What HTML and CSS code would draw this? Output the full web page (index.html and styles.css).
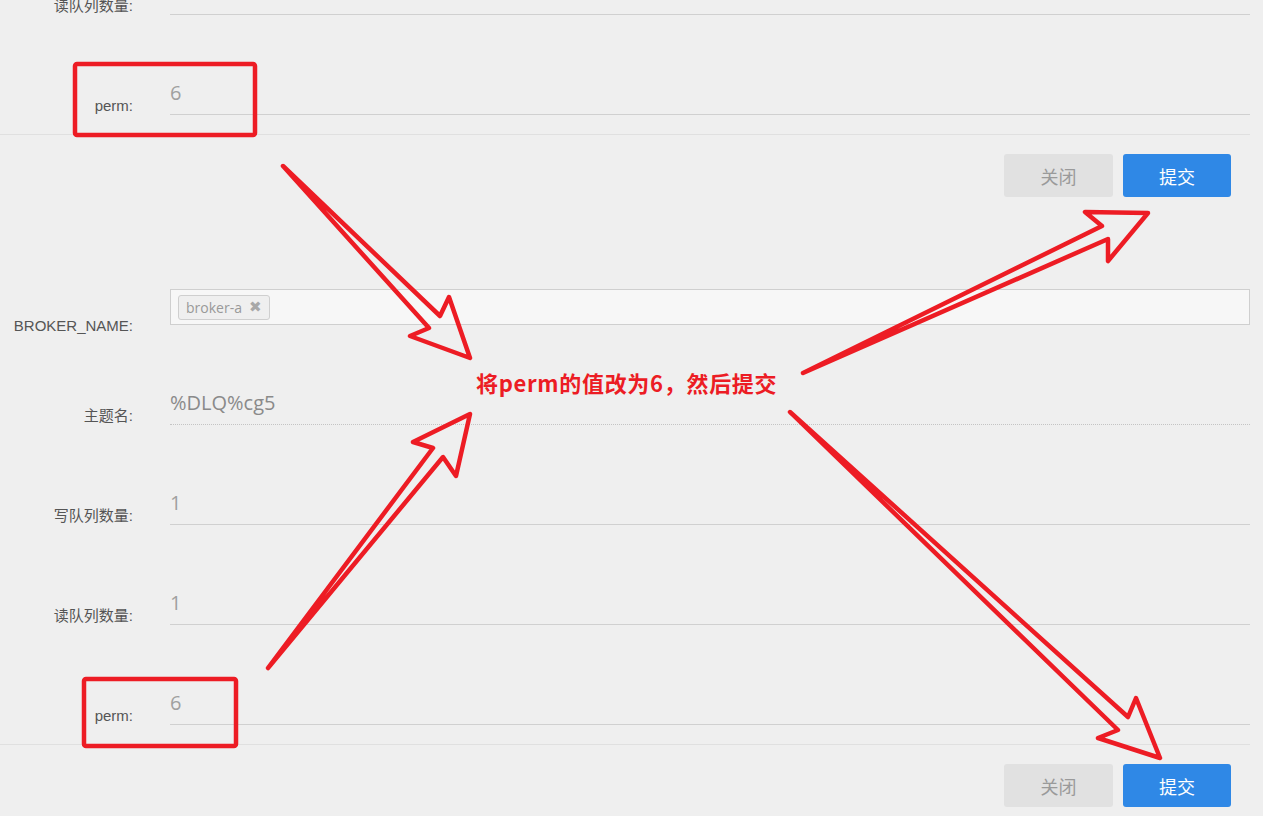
FILE: index.html
```html
<!DOCTYPE html>
<html lang="zh-CN">
<head>
<meta charset="utf-8">
<title>Topic 更新</title>
<link rel="stylesheet" href="styles.css">
</head>
<body>
<div class="page">
  <section class="modal modal-top">
    <div class="form">
      <div class="row">
        <label class="lbl">读队列数量:</label>
        <div class="field"><span class="val">1</span></div>
      </div>
      <div class="row">
        <label class="lbl">perm:</label>
        <div class="field"><span class="val">6</span></div>
      </div>
    </div>
    <div class="footer">
      <button class="btn btn-close">关闭</button>
      <button class="btn btn-submit">提交</button>
    </div>
  </section>

  <section class="modal modal-bottom">
    <div class="form">
      <div class="row row-select">
        <label class="lbl">BROKER_NAME:</label>
        <div class="select"><span class="tag">broker-a <span class="tag-x">✖</span></span></div>
      </div>
      <div class="row">
        <label class="lbl">主题名:</label>
        <div class="field dotted"><span class="val val-topic">%DLQ%cg5</span></div>
      </div>
      <div class="row">
        <label class="lbl">写队列数量:</label>
        <div class="field"><span class="val">1</span></div>
      </div>
      <div class="row">
        <label class="lbl">读队列数量:</label>
        <div class="field"><span class="val">1</span></div>
      </div>
      <div class="row">
        <label class="lbl">perm:</label>
        <div class="field"><span class="val">6</span></div>
      </div>
    </div>
    <div class="footer">
      <button class="btn btn-close">关闭</button>
      <button class="btn btn-submit">提交</button>
    </div>
  </section>
</div>

<div class="annot">
  <svg class="annot-svg" width="1263" height="816" viewBox="0 0 1263 816" xmlns="http://www.w3.org/2000/svg">
    <g fill="none" stroke="#ed1c24" stroke-width="4.5" stroke-linejoin="round" stroke-linecap="round">
      <rect x="75" y="64" width="180" height="71" rx="2"/>
      <rect x="84" y="679" width="152" height="67" rx="2"/>
      <path d="M283,166 L440,316 L449,297 L470,358 L410,336 L429,328 Z"/>
      <path d="M268,668 L433,448 L413,442 L470,414 L456,476 L443,457 Z"/>
      <path d="M803,373 L1102,226 L1085,212 L1148,213 L1108,261 L1108,239 Z"/>
      <path d="M790,412 L1128,717 L1136,698 L1160,758 L1098,738 L1118,730 Z"/>
    </g>
  </svg>
  <p class="note">将perm的值改为6，然后提交</p>
</div>
</body>
</html>
```

FILE: styles.css
```css
html, body {
  margin: 0;
  padding: 0;
}

body {
  position: relative;
  width: 1263px;
  height: 816px;
  overflow: hidden;
  background: #efefef;
  font-family: "Liberation Sans", "Noto Sans CJK SC", sans-serif;
}

.page {
  display: flex;
  flex-direction: column;
}

.modal-top .form {
  margin-top: -85px;
}

.form {
  display: flex;
  flex-direction: column;
  padding-bottom: 19px;
}

.row {
  display: grid;
  grid-template-columns: 133px 1fr;
  column-gap: 37px;
  align-items: end;
  height: 100px;
  padding-right: 13px;
}

.lbl {
  text-align: right;
  font-size: 15px;
  line-height: 18px;
  color: #555;
  white-space: nowrap;
}

.field {
  height: 24px;
  padding-bottom: 9px;
  border-bottom: 1px solid #d0d0d0;
  font-family: "Open Sans", sans-serif;
  font-size: 20px;
  line-height: 24px;
  color: #a0a0a0;
}

.field.dotted {
  border-bottom: 1px dotted #c4c4c4;
}

.val-topic {
  color: #8a8a8a;
}

.row-select {
  height: 36px;
  margin-top: 92px;
}

.row-select .lbl {
  margin-bottom: -10px;
}

.select {
  box-sizing: border-box;
  height: 36px;
  border: 1px solid #cfcfcf;
  background: #f7f7f7;
  padding: 0 7px;
  display: flex;
  align-items: center;
}

.tag {
  box-sizing: border-box;
  height: 25px;
  display: inline-flex;
  align-items: center;
  gap: 7px;
  padding: 0 7px 0 7px;
  border: 1px solid #cfcfcf;
  border-radius: 3px;
  background: #efefef;
  font-family: "Open Sans", sans-serif;
  font-size: 14px;
  color: #999;
}

.tag-x {
  font-family: "DejaVu Sans", sans-serif;
  font-size: 15px;
  line-height: 1;
  color: #a8a8a8;
}

.footer {
  display: flex;
  justify-content: flex-end;
  gap: 10px;
  margin-right: 13px;
  padding: 19px 19px 0 0;
  border-top: 1px solid #e0e0e0;
}

.btn {
  height: 43px;
  border: none;
  border-radius: 3px;
  font-family: "Noto Sans CJK SC", sans-serif;
  font-size: 18px;
  padding: 0;
}

.btn-close {
  width: 109px;
  background: #e1e1e1;
  color: #9a9a9a;
}

.btn-submit {
  width: 108px;
  background: #2f88e6;
  color: #fff;
}

.annot {
  position: absolute;
  left: 0;
  top: 0;
  width: 1263px;
  height: 816px;
  pointer-events: none;
}

.annot-svg {
  position: absolute;
  left: 0;
  top: 0;
}

.note {
  position: absolute;
  left: 476px;
  top: 371px;
  margin: 0;
  font-family: "Noto Sans CJK SC", sans-serif;
  font-weight: bold;
  font-size: 22px;
  line-height: 22px;
  letter-spacing: 0.7px;
  color: #ec1c24;
  white-space: nowrap;
}
```
